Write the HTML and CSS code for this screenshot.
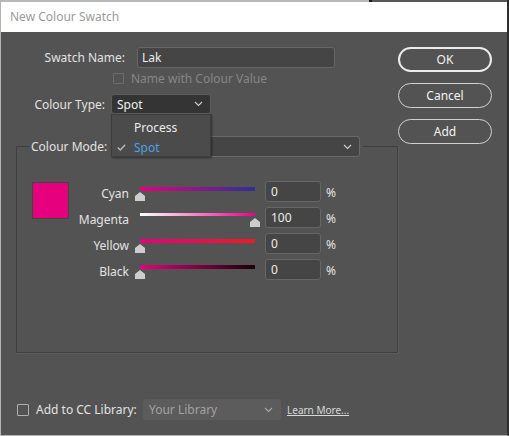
FILE: index.html
```html
<!DOCTYPE html>
<html>
<head>
<meta charset="utf-8">
<link rel="stylesheet" href="styles.css">
</head>
<body>
<div class="window">
  <div class="topstrip"><div class="ts-left"></div><div class="ts-gap"></div><div class="ts-right"></div></div>
  <div class="titlebar">New Colour Swatch</div>
  <div class="client">
    <div class="main">
      <div class="left">
        <div class="row row-name">
          <span class="lbl lbl-name">Swatch Name:</span>
          <div class="field field-name">Lak</div>
        </div>
        <div class="row row-check">
          <span class="cbox disabled"></span>
          <span class="dim">Name with Colour Value</span>
        </div>
        <div class="row row-type">
          <span class="lbl lbl-type">Colour Type:</span>
          <div class="select-wrap">
            <div class="select select-type"><span>Spot</span>
              <svg class="chev" width="9" height="6" viewBox="0 0 9 6"><polyline points="1,1 4.5,4.5 8,1" fill="none" stroke="#cfcfcf" stroke-width="1.1"/></svg>
            </div>
            <div class="menu">
              <div class="mi">Process</div>
              <div class="mi sel">
                <svg class="check" width="9" height="7" viewBox="0 0 9 7"><polyline points="0.8,3.6 3.3,6 8.2,0.8" fill="none" stroke="#b8b8b8" stroke-width="1.4"/></svg>
                Spot
              </div>
            </div>
          </div>
        </div>
        <div class="group">
          <div class="group-head">
            <span class="lbl-mode">Colour Mode:</span>
            <div class="select select-mode"><span></span>
              <svg class="chev" width="9" height="6" viewBox="0 0 9 6"><polyline points="1,1 4.5,4.5 8,1" fill="none" stroke="#cfcfcf" stroke-width="1.1"/></svg>
            </div>
          </div>
          <div class="group-body">
            <div class="swatch"></div>
            <div class="sliders">
              <div class="srow">
                <span class="slbl">Cyan</span>
                <div class="slider"><div class="track t-cyan"></div><div class="thumb" style="left:0%"></div></div>
                <div class="field num">0</div><span class="pct">%</span>
              </div>
              <div class="srow">
                <span class="slbl">Magenta</span>
                <div class="slider"><div class="track t-magenta"></div><div class="thumb" style="left:100%"></div></div>
                <div class="field num">100</div><span class="pct">%</span>
              </div>
              <div class="srow">
                <span class="slbl">Yellow</span>
                <div class="slider"><div class="track t-yellow"></div><div class="thumb" style="left:0%"></div></div>
                <div class="field num">0</div><span class="pct">%</span>
              </div>
              <div class="srow">
                <span class="slbl">Black</span>
                <div class="slider"><div class="track t-black"></div><div class="thumb" style="left:0%"></div></div>
                <div class="field num">0</div><span class="pct">%</span>
              </div>
            </div>
          </div>
        </div>
      </div>
      <div class="right">
        <div class="btn btn-default">OK</div>
        <div class="btn">Cancel</div>
        <div class="btn">Add</div>
      </div>
    </div>
    <div class="bottom">
      <span class="cbox"></span>
      <span class="lbl-cc">Add to CC Library:</span>
      <div class="select select-lib"><span>Your Library</span>
        <svg class="chev" width="9" height="6" viewBox="0 0 9 6"><polyline points="1,1 4.5,4.5 8,1" fill="none" stroke="#a8a8a8" stroke-width="1.1"/></svg>
      </div>
      <span class="learn">Learn More...</span>
    </div>
  </div>
</div>
</body>
</html>
```
FILE: styles.css
```css
* { box-sizing: border-box; }
html, body { margin: 0; padding: 0; }
body {
  width: 509px;
  height: 436px;
  overflow: hidden;
  background: #535353;
  font-family: "Noto Sans", "Open Sans", sans-serif;
  font-size: 12px;
  color: #e2e2e2;
}
.window {
  width: 509px;
  height: 436px;
  display: flex;
  flex-direction: column;
  border-left: 1px solid #b4b4b4;
  border-right: 2px solid #2e2e2e;
  border-bottom: 1px solid #b4b4b4;
  background: #535353;
}
.topstrip { height: 2px; display: flex; }
.ts-left { width: 368px; background: #b9b9b9; }
.ts-gap { width: 3px; background: #1e1e1e; }
.ts-right { flex: 1; background: #565656; }
.titlebar {
  height: 30px;
  background: #ffffff;
  color: #9a9a9a;
  padding-left: 9px;
  display: flex;
  align-items: center;
  line-height: 1;
}
.client { flex: 1; display: flex; flex-direction: column; }
.main { display: flex; }
.left { width: 397px; }
.right {
  width: 94px;
  padding-top: 15px;
  display: flex;
  flex-direction: column;
  gap: 11px;
}
.row { display: flex; align-items: center; }
.lbl { text-align: right; white-space: nowrap; }
.row-name { margin-top: 15px; height: 21px; }
.lbl-name { width: 124px; margin-right: 12px; }
.field {
  background: #454545;
  border: 1px solid #666666;
  border-radius: 3px;
  height: 21px;
  display: flex;
  align-items: center;
  padding-left: 4px;
  color: #ececec;
}
.field-name { width: 198px; }
.row-check { margin-top: 2px; height: 16px; padding-left: 112px; }
.cbox {
  display: inline-block;
  width: 12px;
  height: 12px;
  border: 1px solid #b0b0b0;
  border-radius: 1px;
}
.cbox.disabled { width: 11px; height: 11px; border-color: #6c6c6c; }
.dim { color: #868686; margin-left: 7px; }
.row-type { margin-top: 8px; height: 20px; }
.lbl-type { width: 104px; margin-right: 6px; }
.select-wrap { position: relative; }
.select {
  display: flex;
  align-items: center;
  justify-content: space-between;
  border-radius: 3px;
  padding: 0 7px 0 5px;
}
.select-type {
  width: 100px;
  height: 20px;
  background: #343434;
  border: 1px solid #5c5c5c;
  color: #f0f0f0;
}
.menu {
  position: absolute;
  left: 0;
  top: 20px;
  width: 100px;
  height: 43px;
  background: #4b4b4b;
  border: 1px solid #3d3d3d;
  box-shadow: 1px 1px 2px rgba(0,0,0,0.45);
  padding-top: 2px;
  z-index: 5;
}
.mi {
  height: 20px;
  padding-left: 22px;
  display: flex;
  align-items: center;
  position: relative;
  color: #ececec;
}
.mi.sel { color: #4c9ee8; }
.check { position: absolute; left: 5px; top: 7px; }
.group {
  margin-left: 15px;
  margin-top: 32px;
  width: 382px;
  border: 1px solid #3f3f3f;
  box-shadow: 1px 1px 0 #5e5e5e;
  border-radius: 1px;
  padding-bottom: 72px;
}
.group-head {
  display: flex;
  width: max-content;
  align-items: center;
  margin-top: -11px;
  margin-left: 12px;
  padding: 0 3px 0 2px;
  background: #535353;
  height: 21px;
}
.lbl-mode { width: 74px; margin-right: 6px; white-space: nowrap; }
.select-mode {
  width: 249px;
  height: 21px;
  background: #454545;
  border: 1px solid #6a6a6a;
}
.group-body {
  display: flex;
  padding-left: 15px;
  margin-top: 24px;
}
.swatch {
  width: 37px;
  height: 37px;
  margin-top: 1px;
  background: #e6007e;
  border: 1px solid #444444;
}
.sliders { display: flex; flex-direction: column; gap: 5px; }
.srow { display: flex; align-items: center; height: 21px; }
.slbl { width: 60px; text-align: right; margin-right: 11px; margin-top: 3px; }
.slider { position: relative; width: 115px; height: 21px; }
.track { position: absolute; left: 0; right: 0; top: 6px; height: 4px; }
.t-cyan { background: linear-gradient(to right, #e6007e, #2e3192); }
.t-magenta { background: linear-gradient(to right, #ffffff, #ec008c); height: 3px; }
.t-yellow { background: linear-gradient(to right, #e6007e, #ed1c24); }
.t-black { background: linear-gradient(to right, #e6007e, #1a0008); }
.thumb {
  position: absolute;
  top: 11px;
  width: 10px;
  height: 9px;
  margin-left: -5px;
  background: #cdcdcd;
  clip-path: polygon(50% 0, 100% 45%, 100% 100%, 0 100%, 0 45%);
}
.num { width: 56px; margin-left: 10px; padding-left: 5px; }
.pct { margin-left: 5px; margin-top: 2px; }
.right .btn {
  height: 25px;
  border: 1px solid #d0d0d0;
  border-radius: 13px;
  display: flex;
  align-items: center;
  justify-content: center;
  color: #f2f2f2;
}
.right .btn-default { border: 2px solid #ececec; }
.bottom {
  display: flex;
  align-items: center;
  margin-top: 46px;
  padding-left: 16px;
  height: 21px;
}
.lbl-cc { margin-left: 7px; width: 107px; white-space: nowrap; }
.select-lib {
  width: 138px;
  height: 21px;
  background: #5c5c5c;
  color: #a2a2a2;
  border: 1px solid #5c5c5c;
  border-radius: 2px;
}
.learn {
  margin-left: 6px;
  font-size: 10px;
  color: #d8d8d8;
  text-decoration: underline;
}
```
